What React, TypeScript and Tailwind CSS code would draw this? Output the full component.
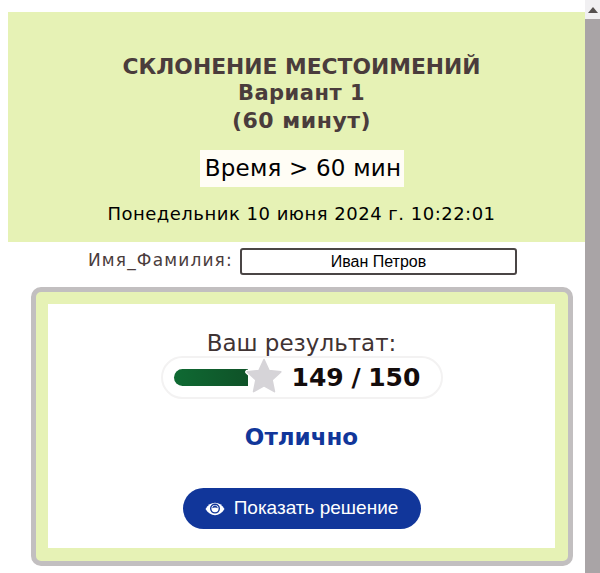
export default function App() {
  return (
    <div className="flex h-[573px] w-[600px] overflow-hidden bg-white font-['DejaVu_Sans',sans-serif]">
      <main className="w-[585px] pt-3 pl-2">
        <header className="flex h-[230px] w-[577px] flex-col items-center bg-[#e6f2b5] pt-[42px] pl-[10px] text-[#4a3c3c]">
          <h1 className="text-[21.8px] leading-[26px] font-bold">СКЛОНЕНИЕ МЕСТОИМЕНИЙ</h1>
          <h2 className="text-[21px] leading-[27px] font-bold tracking-[0.5px]">Вариант 1</h2>
          <h2 className="text-[22px] leading-[28px] font-bold tracking-[0.5px]">(60 минут)</h2>
          <div className="mt-[15px] flex h-[37px] w-[204px] items-center justify-center bg-[#fffdf5] pl-[3px] text-[23px] tracking-[0.2px] text-black">Время &gt; 60 мин</div>
          <div className="mt-[14px] text-[18px] leading-[26px] tracking-[0.5px] text-black">Понедельник 10 июня 2024 г. 10:22:01</div>
        </header>
        <div className="mt-[6px] flex h-[27px] items-center pl-[80px]">
          <label className="-mt-[1px] w-[152px] text-[17px] tracking-[1.15px] text-[#4a3c3c]">Имя_Фамилия:</label>
          <div className="flex h-[27px] w-[277px] items-center justify-center rounded-[3px] border-2 border-[#4a4545] font-['Liberation_Sans',sans-serif] text-[16px] text-black">Иван Петров</div>
        </div>
        <section className="mt-[12px] ml-[23px] h-[279px] w-[542px] rounded-[10px] border-[5px] border-[#c2bfc0] bg-[#e6f2b5] pt-3 pr-[13px] pb-3 pl-3">
          <div className="flex h-[244px] flex-col items-center bg-white pt-[25px]">
            <div className="text-[23px] leading-[28px] text-[#3f3333]">Ваш результат:</div>
            <div className="-mt-[1px] flex h-[43px] w-[282px] items-center rounded-full border-2 border-[#f3f2f2] pl-[11px]">
              <div className="relative h-[17px] w-[90px]">
                <div className="h-[17px] w-[74px] rounded-l-full bg-[linear-gradient(90deg,#0f6a33,#0f5228)]" />
                <svg viewBox="0 0 24 24" className="absolute -top-[12px] left-[71px] h-[38px] w-[38px]">
                  <path d="M12 1.6l3.2 6.9 7.4.9-5.5 5.1 1.5 7.4L12 18.2l-6.6 3.7 1.5-7.4L1.4 9.4l7.4-.9z" fill="#fff" stroke="#fff" strokeWidth="2.6" strokeLinejoin="round" />
                  <path d="M12 1.6l3.2 6.9 7.4.9-5.5 5.1 1.5 7.4L12 18.2l-6.6 3.7 1.5-7.4L1.4 9.4l7.4-.9z" fill="#d6d4d8" stroke="#d6d4d8" strokeWidth="1" strokeLinejoin="round" />
                </svg>
              </div>
              <div className="ml-[28px] text-[25px] leading-none font-bold [word-spacing:-1px] text-[#140c0c]">149 / 150</div>
            </div>
            <div className="mt-[23px] text-[23px] leading-[30px] font-bold text-[#11369a]">Отлично</div>
            <button className="mt-[36px] flex h-[41px] w-[238px] items-center justify-center gap-[9px] rounded-full bg-[#11369a] font-['Liberation_Sans',sans-serif] text-[19px] text-white">
              <svg viewBox="0 0 20 14" className="h-[14px] w-[20px]">
                <path d="M.5 7C3 3 6.2.8 10 .8S17 3 19.5 7C17 11 13.8 13.2 10 13.2S3 11 .5 7z" fill="#fff" />
                <circle cx="10" cy="6.6" r="4.3" fill="#fff" stroke="#11369a" strokeWidth="1.4" />
                <path d="M7.2 6.2C7.6 4.4 8.8 3.6 10 3.6s2.4.8 2.8 2.6C11.5 5.2 8.5 5.2 7.2 6.2z" fill="#11369a" />
              </svg>
              Показать решение
            </button>
          </div>
        </section>
      </main>
      <aside className="flex h-full w-[15px] flex-col bg-[#a9a4a6]">
        <div className="flex h-[19px] items-center justify-center bg-[#f1f0f2]">
          <div className="h-0 w-0 border-x-[5px] border-b-[6px] border-x-transparent border-b-[#55504f]" />
        </div>
      </aside>
    </div>
  );
}
